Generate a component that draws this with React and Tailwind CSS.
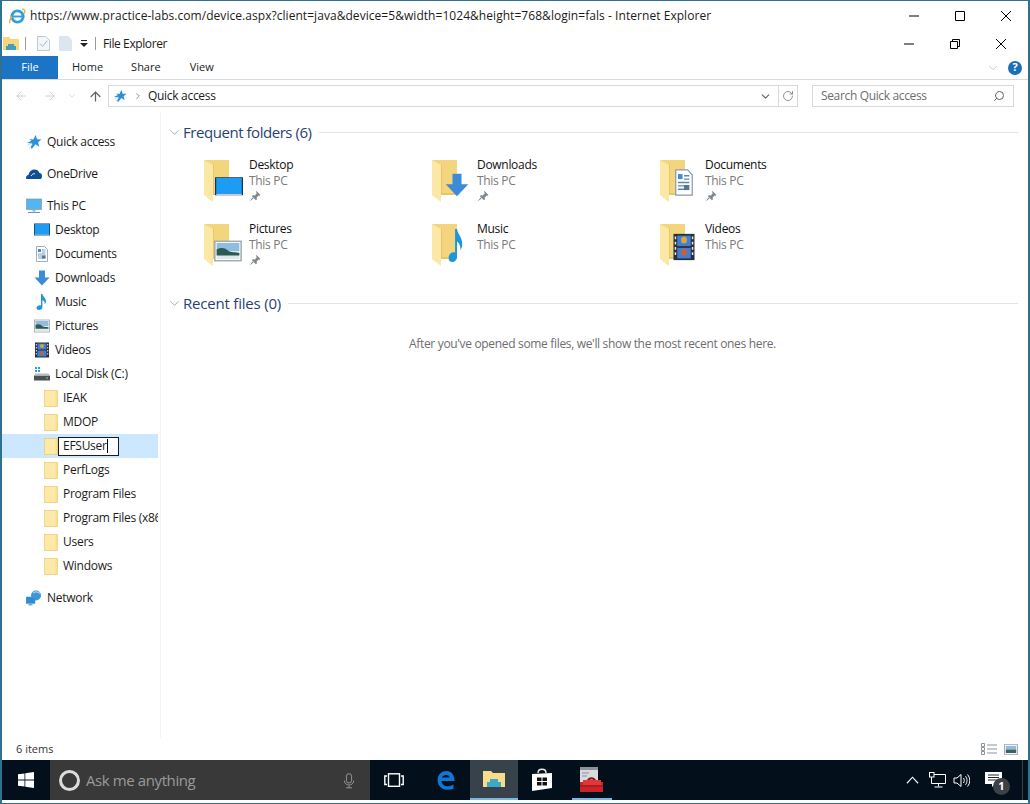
import React from 'react';
import { ChevronDown, ChevronRight, ArrowLeft, ArrowRight, ArrowUp, RotateCw, Search } from 'lucide-react';

// small 16x16 drawings, reused in the sidebar and on top of the big folders
function Star() {
  return (
    <g>
      <path d="M9.500 1l1.600 4.300 4.400.2-3.400 2.800 1.200 4.400-3.800-2.500L5.800 15l-1-2 1.600-3.600L1 9l4.500-2.200L3.500 5l3.900.6z" fill="#2c8fd8" />
      <path d="M1.500 11.500L6 9M3 14l3.500-3.500" stroke="#9fd0f0" strokeWidth=".8" />
    </g>
  );
}
function DesktopArt() {
  return <g><rect x="0" y="1.500" width="16" height="12" fill="#14325c" /><rect x="0.700" y="2" width="14.600" height="10.600" fill="#1c9cf2" /><path d="M.7 12.600h14.600v.6H.7z" fill="#e8f4fc" /></g>;
}
function DocArt() {
  return <g><path d="M2.500.5h8l3 3v12h-11z" fill="#fff" stroke="#8a9aa8" strokeWidth=".8" /><path d="M4 3h3v3H4z" fill="#3b8ed0" /><path d="M8 4h3.500M8 6h3.500M4 8h7.500M4 10h7.500M4 12h7.500" stroke="#5b89ad" strokeWidth=".8" /><path d="M8 9.500h3.500v3H8z" fill="#56788f" /></g>;
}
function DownArt() {
  return <path d="M5 .5h6v7h4.500L8 15.500.5 7.500H5z" fill="#3c8bd6" />;
}
function NoteArt() {
  return <path d="M7 0h1.400c.3 2.500 3.800 4 3.600 7.500-.1 1.200-.6 2-1.200 2.800.1-2.200-1-3.600-2.400-4.300v7.300c0 1.700-1.700 2.700-3.400 2.700-1.500 0-2.500-.8-2.500-2 0-1.600 1.800-2.700 3.400-2.700.4 0 .8 0 1.100.2z" fill="#1e96dc" />;
}
function PictureArt() {
  return <g><rect x=".5" y="2" width="15" height="12" fill="#fff" stroke="#9aa3aa" strokeWidth=".8" /><rect x="1.500" y="3" width="13" height="5" fill="#8fbde0" /><rect x="1.500" y="8" width="13" height="5" fill="#dfe8ea" /><path d="M1.500 7c3-1.500 5-.8 7 1.200 2 .7 4 .7 6 1v1.500h-13z" fill="#2e5a56" /></g>;
}
function FilmArt() {
  return <g><rect x="1" y="0.500" width="14" height="15" fill="#2a2f36" /><rect x="3.500" y="1.500" width="9" height="6" fill="#3f7fd6" /><rect x="3.500" y="8.500" width="9" height="6" fill="#3f7fd6" /><circle cx="8" cy="4" r="2" fill="#d9a63a" /><circle cx="8" cy="11" r="2" fill="#c9603a" /><path d="M1.800 2h1v1.500h-1zM1.800 5h1v1.500h-1zM1.800 8h1v1.500h-1zM1.800 11h1v1.500h-1zM13.200 2h1v1.500h-1zM13.200 5h1v1.500h-1zM13.200 8h1v1.500h-1zM13.200 11h1v1.500h-1z" fill="#e8e8e8" /></g>;
}
function CloudArt() {
  return (
    <g>
      <path d="M.2 13c-.6-2 .6-3.800 2.300-4.200C3.200 5.500 5.500 3.500 8.500 3.500c2.300 0 4 1.200 4.800 3.200 1.700.3 2.700 1.600 2.700 3.300 0 1.300-.5 2.300-1.200 3z" fill="#0f4e94" />
      <path d="M5 10c1-2 2.500-2.500 4-2.200" stroke="#fff" strokeWidth=".9" fill="none" />
    </g>
  );
}
function PcArt() {
  return <g><rect x=".5" y="1" width="15" height="10.500" fill="#52b7f0" stroke="#7d99ad" strokeWidth=".7" /><path d="M6.500 11.500h3v2h-3z" fill="#8fb2c8" /><path d="M2 14h12v1H2z" fill="#6d96b0" /></g>;
}
function DiskArt() {
  return <g><rect x="0" y="9.500" width="16" height="5" fill="#4a5157" /><rect x="1" y="7.500" width="14" height="2" fill="#b6bcc0" /><path d="M12 11.500h2v1h-2z" fill="#8fd36a" /><path d="M1 1h2v2H1zM4 1h2v2H4zM1 4h2v2H1zM4 4h2v2H4z" fill="#25a5d8" /></g>;
}
function NetArt() {
  return <g><circle cx="10" cy="5.500" r="5" fill="#3b97dd" /><path d="M7 3c2-1.500 5-1.500 7 .5" stroke="#c8e6f8" strokeWidth="1" fill="none" /><rect x="0" y="7" width="9" height="6.500" fill="#2a8fd8" stroke="#6d96b0" strokeWidth=".6" /><path d="M2.500 14h4v1.500h-4z" fill="#7da6c0" /></g>;
}

function Icon16({ art, className = 'w-4 h-4' }) {
  return <svg viewBox="0 0 16 16" className={className}>{art}</svg>;
}

function SmallFolder() {
  return (
    <svg viewBox="0 0 14 17" className="w-[14px] h-[17px]">
      <rect x="0.500" y="0.500" width="13" height="16" fill="#fbe08c" stroke="#e8c568" strokeWidth=".6" />
      <path d="M1 1h10.500v14.500L1 16z" fill="#fdeaa8" />
    </svg>
  );
}

function BigFolder({ overlay }) {
  const { art, x, y, w, h, view = '0 0 16 16' } = overlay;
  return (
    <svg viewBox="0 0 40 44" className="w-10 h-11 overflow-visible shrink-0">
      <path d="M0 2h25v35H0z" fill="#f3d57e" />
      <path d="M0 2l9 5v37l-9-7z" fill="#fbe7a6" />
      <path d="M9 7v30h16v-2H10V7z" fill="#e6bd5e" opacity=".7" />
      <svg x={x} y={y} width={w} height={h} viewBox={view} preserveAspectRatio="none">{art}</svg>
    </svg>
  );
}

function Pin() {
  return (
    <svg viewBox="0 0 12 12" className="w-3 h-3 mt-[1px]">
      <path d="M7 .5l4.500 4.500-1 .8-.8-.3-2 2 .2 2-1 .8-4-4 .8-1 2 .2 2-2-.3-.8zM3.500 7.500L.5 11.500l4-3z" fill="#7f888f" />
    </svg>
  );
}

const navTop = [
  { name: 'Quick access', art: <Star /> },
  { name: 'OneDrive', art: <CloudArt /> },
];

const pcItems = [
  { name: 'Desktop', art: <DesktopArt /> },
  { name: 'Documents', art: <DocArt /> },
  { name: 'Downloads', art: <DownArt /> },
  { name: 'Music', art: <NoteArt /> },
  { name: 'Pictures', art: <PictureArt /> },
  { name: 'Videos', art: <FilmArt /> },
  { name: 'Local Disk (C:)', art: <DiskArt /> },
];

const diskFolders = ['IEAK', 'MDOP', 'EFSUser', 'PerfLogs', 'Program Files', 'Program Files (x86)', 'Users', 'Windows'];

const tiles = [
  { name: 'Desktop', pinned: true, overlay: { art: <DesktopArt />, x: 11, y: 17, w: 28, h: 24 } },
  { name: 'Downloads', pinned: true, overlay: { art: <DownArt />, x: 13, y: 15, w: 24, h: 24 } },
  { name: 'Documents', pinned: true, overlay: { art: <DocArt />, x: 12, y: 11, w: 24, h: 27 } },
  { name: 'Pictures', pinned: true, overlay: { art: <PictureArt />, x: 10, y: 16, w: 28, h: 26 } },
  { name: 'Music', pinned: false, overlay: { art: <NoteArt />, x: 13, y: 7, w: 23, h: 33 } },
  { name: 'Videos', pinned: false, overlay: { art: <FilmArt />, x: 12, y: 11, w: 24, h: 28 } },
];

function SideRow({ art, name, className = '' }) {
  return (
    <div className={`h-6 flex items-center whitespace-nowrap overflow-hidden ${className}`}>
      <Icon16 art={art} className="w-4 h-4 shrink-0" />
      <span className="ml-[5px]">{name}</span>
    </div>
  );
}

function Sidebar() {
  return (
    <div className="w-[156px] shrink-0 pt-[18px] pr-[2px] text-[12px] tracking-[-0.27px] text-[#1b1b1b] border-r border-[#f4f4f4] box-content">
      <SideRow {...navTop[0]} className="pl-6" />
      <SideRow {...navTop[1]} className="pl-6 mt-2" />
      <SideRow name="This PC" art={<PcArt />} className="pl-6 mt-2" />
      {pcItems.map(i => (
        <SideRow key={i.name} {...i} className="pl-8" />
      ))}
      {diskFolders.map(f => (
        <div key={f} className={`h-6 pl-[42px] flex items-center whitespace-nowrap overflow-hidden ${f === 'EFSUser' ? 'bg-[#cce8ff]' : ''}`}>
          <div className="shrink-0"><SmallFolder /></div>
          {f === 'EFSUser' ? (
            <div className="w-[61px] h-[19px] bg-white border border-[#1b1b1b] pl-[4px] flex items-center">
              <span>{f}</span>
              <span className="w-px h-[14px] bg-black" />
            </div>
          ) : (
            <span className="ml-[5px]">{f}</span>
          )}
        </div>
      ))}
      <SideRow name="Network" art={<NetArt />} className="pl-6 mt-2" />
    </div>
  );
}

function SectionHead({ title, className = '' }) {
  return (
    <div className={`flex items-center h-5 ${className}`}>
      <ChevronDown size={15} strokeWidth={1} className="text-[#6f7f95] shrink-0" />
      <span className="ml-[1px] text-[15px] text-[#2a3f73] whitespace-nowrap">{title}</span>
      <div className="flex-1 h-px bg-[#e3e3e3] ml-[7px]" />
    </div>
  );
}

function TaskBar() {
  return (
    <div className="h-10 bg-[#03101c] flex items-stretch shrink-0 mx-[-1px]">
      <div className="w-[49px] flex items-center justify-center">
        <svg viewBox="0 0 16 16" className="w-4 h-4"><path d="M0 2.300l6.500-.9v6.200H0zM7.300 1.300L16 0v7.600H7.300zM0 8.400h6.500v6.200L0 13.700zM7.300 8.400H16V16l-8.700-1.200z" fill="#fff" /></svg>
      </div>
      <div className="w-[320px] bg-[#393939] flex items-center pl-[9px] pr-[15px]">
        <div className="w-[21px] h-[21px] rounded-full border-[3px] border-[#dcdcdc] shrink-0" />
        <span className="ml-[6px] text-[15px] tracking-[-0.4px] text-[#9a9a9a] flex-1 whitespace-nowrap">Ask me anything</span>
        <svg viewBox="0 0 14 18" className="w-[12px] h-[17px]" fill="none" stroke="#a3a3a3" strokeWidth="1"><rect x="4" y="1" width="6" height="11" rx="3" /><path d="M1.500 9c0 7 11 7 11 0M7 15v2.500M3.500 17.500h7" /></svg>
      </div>
      <div className="w-[48px] flex items-center justify-center">
        <svg viewBox="0 0 20 15" className="w-5 h-[15px]" fill="none" stroke="#fff" strokeWidth="1.400"><path d="M3 3H.8v8.500H3M17 3h2.200v8.500H17" /><rect x="4.500" y=".8" width="11" height="12.500" /></svg>
      </div>
      <div className="w-[52px] pl-[4px] flex items-center justify-center">
        <svg viewBox="0 0 22 22" className="w-[22px] h-[22px]" fill="none"><path d="M2.500 11C3 5 7 2 11.500 2 16.500 2 19.500 6 19.500 12H6.500c0 5 6.500 7 12 3.500v4.300C11 22.500 3 20 2.500 11zM6.800 8.600h8.200C14.500 5 8 5 6.800 8.600z" fill="#0d78d8" /></svg>
      </div>
      <div className="w-[48px] bg-[#37424a] flex items-center justify-center border-b-2 border-[#7fb6de]">
        <svg viewBox="0 0 22 18" className="w-[22px] h-[18px]"><path d="M0 1h8l2 2h12v14H0z" fill="#f6dd8b" /><path d="M7 9h8v3h3v5H4v-5h3z" fill="#3ea9c7" /></svg>
      </div>
      <div className="w-[48px] flex items-center justify-center">
        <svg viewBox="0 0 22 24" className="w-[22px] h-6"><path d="M7 5c0-5 8-5 8 0" fill="none" stroke="#eee" strokeWidth="1.400" /><path d="M1 6l20-1v15l-20 3z" fill="#fff" /><path d="M6 9.500h4.500V13H6zM11.500 9.500H16V13h-4.500zM6 14h4.500v3.500H6zM11.500 14H16v3.500h-4.500z" fill="#111" /></svg>
      </div>
      <div className="w-[50px] flex items-center justify-center relative">
        <svg viewBox="0 0 24 26" className="w-6 h-[26px]"><rect x="1" y="0" width="18" height="16" fill="#d8dade" /><rect x="1" y="0" width="18" height="3" fill="#8d9299" /><path d="M3 6h7M3 9h5" stroke="#8d9299" /><rect x="1" y="15" width="23" height="10" fill="#c8242a" /><path d="M8 14c0-5 9-5 9 0h-2c0-2-5-2-5 0z" fill="#8f1519" /><path d="M4 13h18v5H4z" fill="#e0373b" /><path d="M1 19h23" stroke="#8f1519" /></svg>
        <div className="absolute bottom-0 left-[6px] right-[4px] h-[2px] bg-[#7fb6de]" />
      </div>
      <div className="flex-1" />
      <div className="flex items-center pr-[13px] mr-[6px] border-r border-[#3a3f44]">
        <svg viewBox="0 0 14 8" className="w-[13px] h-2" fill="none" stroke="#fff" strokeWidth="1.200"><path d="M1 7.500L7 1l6 6.500" /></svg>
        <svg viewBox="0 0 17 16" className="w-[17px] h-4 ml-[10px]" fill="none" stroke="#fff" strokeWidth="1"><rect x=".5" y=".5" width="4.500" height="4.500" /><path d="M5 2.500h11.500v9H2.500V5M9.500 11.500v3M5.500 15h8" /></svg>
        <svg viewBox="0 0 17 15" className="w-[17px] h-[15px] ml-[7px]" fill="none" stroke="#fff" strokeWidth="1"><path d="M1 5h3l4-3.500v12L4 10H1zM10.500 5c1 1.500 1 3.500 0 5M12.500 3.200c2 2.500 2 6 0 8.600M14.500 1.500c3 3.500 3 8.500 0 12" /></svg>
        <div className="relative ml-[15px] w-[24px] h-[26px]">
          <svg viewBox="0 0 17 15" className="w-[17px] h-[15px] absolute top-[5px] left-0"><path d="M0 0h17v12h-7l-3 3v-3H0z" fill="#fff" /><path d="M3 3h11M3 5.500h11M3 8h11" stroke="#22282e" /></svg>
          <div className="absolute left-[8px] top-[11px] w-[17px] h-[17px] rounded-full bg-[#3d4145] text-white text-[11px] font-bold flex items-center justify-center">1</div>
        </div>
      </div>
    </div>
  );
}

export default function App() {
  return (
    <div className="w-[1030px] h-[804px] bg-white flex flex-col overflow-hidden border-t border-b border-x-2 border-[#2f7191] text-[#1b1b1b]" style={{ fontFamily: '"Open Sans", "Noto Sans", sans-serif' }}>
      {/* IE title bar */}
      <div className="h-[30px] flex items-center shrink-0 pl-[7px]">
        <svg viewBox="0 0 18 18" className="w-[17px] h-[17px] shrink-0"><circle cx="9" cy="9" r="6" fill="none" stroke="#2e9ee0" strokeWidth="3" /><path d="M3 9h12" stroke="#2e9ee0" strokeWidth="2" /><path d="M14 1c3 0 3 3 2 5M1 16c-1-2 0-4 2-7" stroke="#e3b23c" strokeWidth="1.500" fill="none" /></svg>
        <span className="ml-[4px] text-[12px] whitespace-nowrap flex-1 tracking-[0.05px]">https://www.practice-labs.com/device.aspx?client=java&amp;device=5&amp;width=1024&amp;height=768&amp;login=fals - Internet Explorer</span>
        <WinButtons restore={false} className="mr-[-1px]" />
      </div>

      {/* quick access toolbar */}
      <div className="h-[25px] flex items-center shrink-0 pl-[1px]">
        <svg viewBox="0 0 16 16" className="w-4 h-4"><path d="M0 1h6l2 2h8v11H0z" fill="#f6d77f" /><path d="M5 8h6v2h2v4H3v-4h2z" fill="#3ea0bd" /></svg>
        <div className="w-px h-[13px] bg-[#9a9a9a] ml-[6px]" />
        <svg viewBox="0 0 14 16" className="w-[13px] h-[15px] ml-[11px]"><path d="M.5.5h9l4 4v11H.5z" fill="#f4f7fa" stroke="#b8c3cc" /><path d="M3 8l3 3 5-6" stroke="#9fb0be" fill="none" /></svg>
        <svg viewBox="0 0 14 16" className="w-[13px] h-[15px] ml-[9px]"><path d="M0 0h10l4 4v12H0z" fill="#dde6f0" /></svg>
        <svg viewBox="0 0 8 7" className="w-2 h-[7px] ml-[8px]"><path d="M1 0h6v1H1zM0 3h8L4 7z" fill="#222" /></svg>
        <div className="w-px h-[13px] bg-[#9a9a9a] ml-[7px]" />
        <span className="ml-[7px] text-[12px] tracking-[-0.4px]">File Explorer</span>
        <div className="flex-1" />
        <WinButtons restore className="mr-[4px]" />
      </div>

      {/* ribbon tabs */}
      <div className="h-[23px] flex items-stretch shrink-0 text-[11px] border-b border-[#dadbdc] box-content">
        <div className="w-[56px] bg-[#1b74c5] text-white flex items-center justify-center">File</div>
        <div className="ml-[14px] flex items-center">Home</div>
        <div className="ml-[28px] flex items-center">Share</div>
        <div className="ml-[29px] flex items-center">View</div>
        <div className="flex-1" />
        <div className="flex items-center pr-[6px] gap-[8px]">
          <ChevronDown size={14} strokeWidth={1.2} className="text-[#a9b2ba]" />
          <div className="w-[14px] h-[14px] rounded-full bg-[#1a6fb8] text-white text-[11px] font-bold flex items-center justify-center">?</div>
        </div>
      </div>

      {/* address row */}
      <div className="h-[32px] flex items-center shrink-0 text-[12px]">
        <ArrowLeft size={14} strokeWidth={1.500} className="text-[#c4c7ca] ml-[12px]" />
        <ArrowRight size={14} strokeWidth={1.500} className="text-[#c4c7ca] ml-[15px]" />
        <ChevronDown size={10} strokeWidth={1.500} className="text-[#c4c7ca] ml-[10px]" />
        <ArrowUp size={15} strokeWidth={2} className="text-[#5d6266] ml-[11px]" />
        <div className="ml-[5px] w-[690px] h-[22px] border border-[#d9d9d9] flex items-center">
          <Icon16 art={<Star />} className="w-[14px] h-[14px] ml-[4px]" />
          <ChevronRight size={10} strokeWidth={1.500} className="text-[#555] ml-[6px]" />
          <span className="ml-[5px] flex-1 tracking-[-0.3px]">Quick access</span>
          <ChevronDown size={13} strokeWidth={2} className="text-[#5d6266] mr-[6px]" />
          <div className="w-[19px] h-full border-l border-[#d9d9d9] flex items-center justify-center">
            <RotateCw size={12} strokeWidth={1.500} className="text-[#6b7075]" />
          </div>
        </div>
        <div className="ml-[14px] w-[202px] h-[22px] border border-[#d9d9d9] flex items-center pl-[8px] pr-[8px] text-[#6d6d6d]">
          <span className="flex-1 tracking-[-0.35px]">Search Quick access</span>
          <Search size={12} strokeWidth={2} className="text-[#5d6266] -scale-x-100" />
        </div>
      </div>

      {/* body */}
      <div className="flex-1 flex min-h-0">
        <Sidebar />
        <div className="flex-1 pt-[10px] pl-[6px] pr-[10px] min-w-0">
          <SectionHead title="Frequent folders (6)" className="tracking-[-0.45px]" />
          <div className="grid grid-cols-[228px_228px_228px] auto-rows-[64px] pl-[37px] mt-[16px]">
            {tiles.map(t => (
              <div key={t.name} className="flex items-start">
                <BigFolder overlay={t.overlay} />
                <div className="ml-[5px] -mt-px flex flex-col text-[12px] leading-4 tracking-[-0.3px]">
                  <span className="text-[#111]">{t.name}</span>
                  <span className="text-[#7a7a7a]">This PC</span>
                  {t.pinned && <Pin />}
                </div>
              </div>
            ))}
          </div>
          <SectionHead title="Recent files (0)" className="mt-[7px] tracking-[-0.2px]" />
          <div className="mt-[22px] text-center text-[12px] text-[#6d6d6d] tracking-[-0.33px]">After you've opened some files, we'll show the most recent ones here.</div>
        </div>
      </div>

      {/* status bar */}
      <div className="h-[22px] flex items-center shrink-0 pl-[14px] pr-[7px] text-[11px] text-[#333]">
        <span className="flex-1">6 items</span>
        <svg viewBox="0 0 16 12" className="w-4 h-3 mr-[7px]" fill="none" stroke="#8d9499"><path d="M.5.5h3v3h-3zM.5 4.500h3v3h-3zM.5 8.500h3v3h-3zM6 2h10M6 6h10M6 10h10" /></svg>
        <svg viewBox="0 0 16 12" className="w-[14px] h-[11px] mr-[3px]"><rect x=".5" y=".5" width="15" height="11" fill="#fff" stroke="#9aa3aa" /><rect x="2" y="2" width="12" height="4" fill="#8fbde0" /><rect x="2" y="6" width="12" height="4" fill="#3e6062" /></svg>
      </div>

      <TaskBar />
      <div className="h-[3px] shrink-0" />
    </div>
  );
}

function WinButtons({ restore, className = '' }) {
  return (
    <div className={`flex items-center shrink-0 ${className}`}>
      <div className="w-[46px] flex justify-center">
        <svg viewBox="0 0 10 10" className="w-[10px] h-[10px]"><path d="M0 5h10" stroke="#000" strokeWidth="1" /></svg>
      </div>
      <div className="w-[46px] flex justify-center">
        {restore ? (
          <svg viewBox="0 0 10 10" className="w-[10px] h-[10px]" fill="none" stroke="#000" strokeWidth="1"><path d="M.5 2.500h7v7h-7zM2.500 2.500v-2h7v7h-2" /></svg>
        ) : (
          <svg viewBox="0 0 10 10" className="w-[10px] h-[10px]" fill="none" stroke="#000" strokeWidth="1"><path d="M.5.500h9v9h-9z" /></svg>
        )}
      </div>
      <div className="w-[46px] flex justify-center">
        <svg viewBox="0 0 10 10" className="w-[10px] h-[10px]" fill="none" stroke="#000" strokeWidth="1"><path d="M0 0l10 10M10 0L0 10" /></svg>
      </div>
    </div>
  );
}
